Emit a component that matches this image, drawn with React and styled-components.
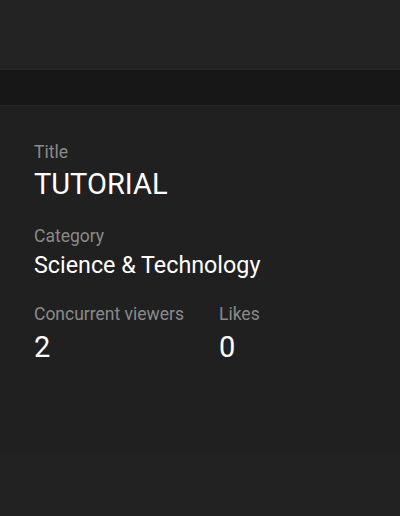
import React from 'react'
import styled, { createGlobalStyle } from 'styled-components'

const Global = createGlobalStyle`
  html, body {
    margin: 0;
    padding: 0;
    background: #222222;
  }
  body {
    font-family: Roboto, "Liberation Sans", sans-serif;
  }
`

const Page = styled.div`
  display: flex;
  flex-direction: column;
  width: 400px;
  height: 516px;
  background: #222222;
`
const TopBar = styled.div`
  height: 69px;
  background: #232323;
  border-bottom: 1px solid #262626;
`
const Band = styled.div`
  height: 35px;
  background: #171717;
`
const Panel = styled.section`
  display: flex;
  flex-direction: column;
  gap: 24px;
  height: 348px;
  box-sizing: border-box;
  padding: 35px 34px 0;
  background: #202020;
  border-top: 1px solid #252525;
`
const Row = styled.div`
  display: flex;
  gap: 35px;
`
const Field = styled.div`
  display: flex;
  flex-direction: column;
  gap: 4px;
`
const Label = styled.div`
  color: #8a8a8a;
  font-size: 17.5px;
  line-height: 22px;
`
const Value = styled.div`
  color: #ffffff;
  font-size: ${p => p.size}px;
  line-height: ${p => p.lh}px;
`

const App = () => (
  <>
    <Global />
    <Page>
      <TopBar />
      <Band />
      <Panel>
        <Field>
          <Label>Title</Label>
          <Value size={29} lh={34}>TUTORIAL</Value>
        </Field>
        <Field>
          <Label>Category</Label>
          <Value size={23.3} lh={28}>Science &amp; Technology</Value>
        </Field>
        <Row>
          <Field>
            <Label>Concurrent viewers</Label>
            <Value size={29} lh={36}>2</Value>
          </Field>
          <Field>
            <Label>Likes</Label>
            <Value size={29} lh={36}>0</Value>
          </Field>
        </Row>
      </Panel>
    </Page>
  </>
)

export default App
